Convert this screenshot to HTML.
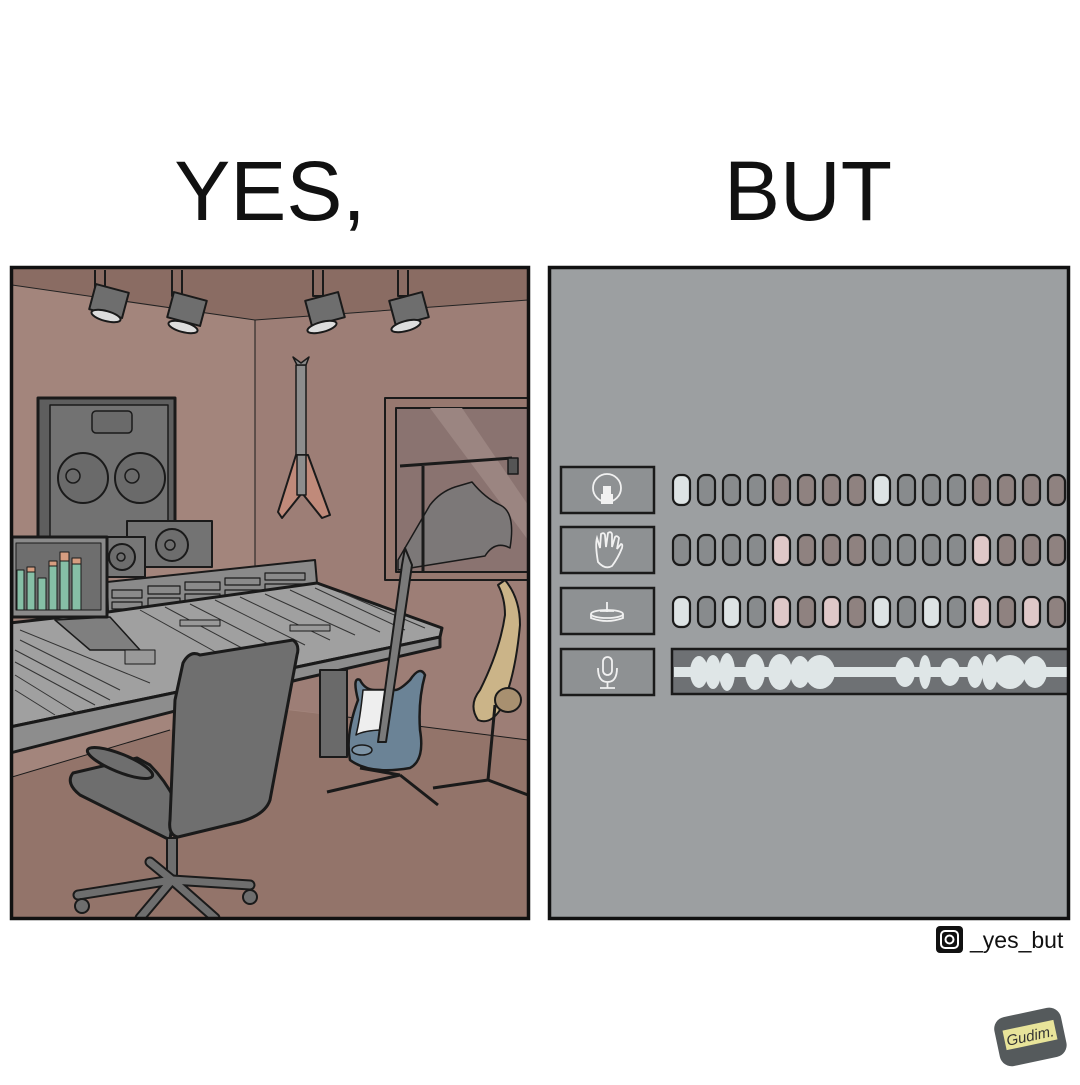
<!DOCTYPE html>
<html><head><meta charset="utf-8"><style>
html,body{margin:0;padding:0;background:#fff;}
body{width:1080px;height:1080px;overflow:hidden;font-family:"Liberation Sans",sans-serif;}
</style></head><body>
<svg width="1080" height="1080" viewBox="0 0 1080 1080" xmlns="http://www.w3.org/2000/svg">
<rect width="1080" height="1080" fill="#fff"/>
<text x="270" y="220" font-family="Liberation Sans" font-size="84" text-anchor="middle" fill="#111">YES,</text>
<text x="808" y="220" font-family="Liberation Sans" font-size="84" text-anchor="middle" fill="#111">BUT</text>

<defs><clipPath id="cl"><rect x="12" y="268" width="516" height="650"/></clipPath>
<clipPath id="cr"><rect x="550" y="268" width="518" height="650"/></clipPath></defs>
<g clip-path="url(#cl)" stroke="#1a1a1a" stroke-linejoin="round">
<rect x="12" y="268" width="516" height="650" fill="#93746a" stroke="none"/>
<polygon points="12,268 528,268 528,740 347,717 287,710 170,730 12,777" fill="#a3857c" stroke="none"/>
<polygon points="255,320 528,300 528,740 255,705" fill="#9d7e76" stroke="none"/>
<polygon points="12,268 528,268 528,300 255,320 12,285" fill="#8a6c63" stroke="#222" stroke-width="1"/>
<line x1="255" y1="320" x2="255" y2="705" stroke-width="1"/>
<polyline points="12,777 170,730" fill="none" stroke-width="1"/>
<polyline points="347,717 528,740" fill="none" stroke-width="1"/>
<g fill="#6e6e6e" stroke-width="2">
<path d="M95,270v18h10v-18" fill="none"/><rect x="92" y="288" width="34" height="26" transform="rotate(15 109 301)"/><ellipse cx="106" cy="316" rx="15" ry="5" fill="#ddd" transform="rotate(15 106 316)"/>
<path d="M172,270v26h10v-26" fill="none"/><rect x="170" y="296" width="34" height="26" transform="rotate(15 187 309)"/><ellipse cx="183" cy="327" rx="15" ry="5" fill="#ddd" transform="rotate(15 183 327)"/>
<path d="M313,270v26h10v-26" fill="none"/><rect x="308" y="296" width="34" height="26" transform="rotate(-15 325 309)"/><ellipse cx="322" cy="327" rx="15" ry="5" fill="#ddd" transform="rotate(-15 322 327)"/>
<path d="M398,270v26h10v-26" fill="none"/><rect x="392" y="296" width="34" height="26" transform="rotate(-15 409 309)"/><ellipse cx="406" cy="326" rx="15" ry="5" fill="#ddd" transform="rotate(-15 406 326)"/>
</g>
<rect x="385" y="398" width="150" height="182" fill="#97786f" stroke-width="2"/>
<rect x="396" y="408" width="140" height="164" fill="#8a7370" stroke-width="2"/>
<polygon points="430,408 462,408 528,505 528,540" fill="#9b8581" stroke="none"/>
<path d="M398,560 L430,505 Q440,492 455,487 L472,482 Q485,498 500,505 Q516,512 510,548 Q495,540 485,556 L398,570Z" fill="#7c7878" stroke-width="1.5"/>
<line x1="400" y1="466" x2="512" y2="458" stroke-width="3"/>
<line x1="423" y1="466" x2="423" y2="572" stroke-width="3"/>
<rect x="508" y="458" width="10" height="16" fill="#555" stroke-width="1.5"/>
<rect x="296" y="365" width="10" height="110" fill="#8d8d8d" stroke-width="1.5"/>
<path d="M297,365 l-4,-8 l8,6 l8,-6 l-3,8z" fill="#888" stroke-width="1.5"/>
<path d="M296,455 L278,512 L282,518 L302,493 L322,518 L330,515 L308,455Z" fill="#c08a7a" stroke-width="2"/>
<rect x="297" y="455" width="9" height="40" fill="#8d8d8d" stroke-width="1.5"/>
<rect x="38" y="398" width="137" height="150" fill="#5e5e5e" stroke-width="3"/>
<rect x="50" y="405" width="118" height="143" fill="#727272" stroke-width="1.5"/>
<rect x="92" y="411" width="40" height="22" rx="4" fill="#6a6a6a" stroke-width="1.5"/>
<circle cx="83" cy="478" r="25" fill="#6a6a6a" stroke-width="2"/><circle cx="73" cy="476" r="7" fill="#6a6a6a" stroke-width="1.5"/>
<circle cx="140" cy="478" r="25" fill="#6a6a6a" stroke-width="2"/><circle cx="132" cy="476" r="7" fill="#6a6a6a" stroke-width="1.5"/>
<rect x="127" y="521" width="85" height="46" fill="#737373" stroke-width="2"/>
<circle cx="172" cy="545" r="16" fill="#6d6d6d" stroke-width="2"/><circle cx="170" cy="545" r="5" fill="#6d6d6d" stroke-width="1.5"/>
<rect x="100" y="537" width="45" height="40" fill="#777" stroke-width="2"/>
<circle cx="122" cy="557" r="13" fill="#6d6d6d" stroke-width="2"/><circle cx="121" cy="557" r="4" fill="#6d6d6d" stroke-width="1.5"/>
<polygon points="107,582 315,560 317,583 108,612" fill="#8a8a8a" stroke-width="2"/>
<g fill="none" stroke-width="1.2">
<path d="M112,590h30v8h-30zM112,602h30v7h-30zM148,586h32v8h-32zM148,598h32v8h-32zM185,582h35v8h-35zM185,594h35v8h-35zM225,578h35v7h-35zM225,590h35v7h-35zM265,573h40v7h-40zM265,584h40v7h-40z"/>
</g>
<polygon points="10,623 108,612 317,583 442,628 440,637 297,667 10,727" fill="#a0a0a0" stroke-width="3"/>
<polygon points="10,727 297,667 440,637 440,647 297,680 10,753" fill="#8d8d8d" stroke-width="3"/>
<polygon points="55,620 110,617 140,650 90,650" fill="#7f7f7f" stroke-width="1.5"/>
<g stroke="#333" stroke-width="1">
<line x1="20" y1="640" x2="120" y2="690"/><line x1="15" y1="650" x2="110" y2="700"/><line x1="15" y1="662" x2="95" y2="705"/><line x1="15" y1="675" x2="75" y2="712"/><line x1="15" y1="690" x2="55" y2="715"/>
<line x1="20" y1="630" x2="150" y2="683"/>
<line x1="140" y1="610" x2="230" y2="660"/><line x1="165" y1="607" x2="255" y2="655"/><line x1="190" y1="604" x2="280" y2="650"/><line x1="215" y1="600" x2="305" y2="645"/>
<line x1="240" y1="597" x2="330" y2="640"/><line x1="265" y1="594" x2="355" y2="635"/><line x1="290" y1="590" x2="380" y2="632"/><line x1="315" y1="588" x2="405" y2="630"/><line x1="340" y1="592" x2="425" y2="628"/>
</g>
<g fill="#999" stroke-width="1"><rect x="125" y="650" width="30" height="14"/><rect x="180" y="620" width="40" height="6"/><rect x="290" y="625" width="40" height="6"/></g>
<rect x="320" y="670" width="27" height="87" fill="#6a6a6a" stroke-width="2"/>
<rect x="12" y="537" width="95" height="80" fill="#8a8a8a" stroke-width="3"/>
<rect x="16" y="543" width="85" height="67" fill="#6e6e6e" stroke-width="1"/>
<g fill="#86bfa6" stroke-width="1">
<rect x="17" y="570" width="7" height="40"/><rect x="27" y="572" width="8" height="38"/><rect x="38" y="578" width="8" height="32"/><rect x="49" y="566" width="8" height="44"/><rect x="60" y="561" width="9" height="49"/><rect x="72" y="564" width="9" height="46"/>
</g>
<g fill="#d69d80" stroke-width="1"><rect x="27" y="567" width="8" height="5"/><rect x="49" y="561" width="8" height="5"/><rect x="60" y="552" width="9" height="9"/><rect x="72" y="558" width="9" height="6"/></g>
<g stroke-width="3"><line x1="327" y1="792" x2="400" y2="775"/><line x1="400" y1="775" x2="438" y2="805"/><line x1="360" y1="768" x2="400" y2="775"/></g>
<path d="M360,680 Q352,676 358,700 Q345,735 350,760 Q370,775 410,768 Q425,760 420,730 Q418,700 425,675 Q420,665 410,680 Q400,690 395,690 L375,690 Q365,690 360,680Z" fill="#6b8396" stroke-width="2.5"/>
<path d="M363,690 Q360,720 356,735 Q365,730 385,730 L390,690Z" fill="#eee" stroke-width="1.5"/>
<ellipse cx="362" cy="750" rx="10" ry="5" fill="#7d94a6" stroke-width="1.5"/>
<polygon points="378,742 386,742 412,565 405,548 402,565" fill="#7a7a7a" stroke-width="2"/>
<path d="M478,720 Q468,705 480,690 Q500,650 505,615 Q505,598 498,585 L505,580 Q520,598 520,625 Q515,680 500,710 Q490,725 478,720Z" fill="#cbb488" stroke-width="2"/>
<ellipse cx="508" cy="700" rx="13" ry="12" fill="#a89070" stroke-width="2"/>
<g stroke-width="3"><line x1="495" y1="705" x2="488" y2="780"/><line x1="433" y1="788" x2="488" y2="780"/><line x1="488" y1="780" x2="528" y2="795"/></g>
<path d="M73,773 Q65,783 80,795 L170,840 L175,800 Q165,780 150,765 L137,758Z" fill="#6e6e6e" stroke-width="3"/>
<path d="M183,663 Q190,650 200,655 L293,640 Q300,645 297,655 L270,800 Q265,815 240,822 L178,837 Q168,835 170,820 L175,700Z" fill="#6f6f6f" stroke-width="3"/>
<ellipse cx="120" cy="763" rx="35" ry="9" transform="rotate(22 120 763)" fill="#6e6e6e" stroke-width="3"/>
<rect x="167" y="838" width="10" height="40" fill="#6e6e6e" stroke-width="2"/>
<g stroke="#1a1a1a" stroke-width="11" stroke-linecap="round"><line x1="172" y1="880" x2="78" y2="895"/><line x1="172" y1="880" x2="250" y2="885"/><line x1="172" y1="880" x2="150" y2="862"/><line x1="172" y1="880" x2="140" y2="918"/><line x1="172" y1="880" x2="215" y2="918"/></g>
<g stroke="#6e6e6e" stroke-width="7" stroke-linecap="round"><line x1="172" y1="880" x2="78" y2="895"/><line x1="172" y1="880" x2="250" y2="885"/><line x1="172" y1="880" x2="150" y2="862"/><line x1="172" y1="880" x2="140" y2="918"/><line x1="172" y1="880" x2="215" y2="918"/></g>
<circle cx="82" cy="906" r="7" fill="#6e6e6e" stroke-width="2"/><circle cx="250" cy="897" r="7" fill="#6e6e6e" stroke-width="2"/>
</g>
<rect x="11.5" y="267.5" width="517" height="651" fill="none" stroke="#111" stroke-width="3.5"/>

<g clip-path="url(#cr)">
<rect x="550" y="268" width="518" height="650" fill="#9c9fa1"/>
<g fill="#8e9193" stroke="#1a1a1a" stroke-width="2.5">
<rect x="561" y="467" width="93" height="46"/><rect x="561" y="527" width="93" height="46"/><rect x="561" y="588" width="93" height="46"/><rect x="561" y="649" width="93" height="46"/>
</g>
<g fill="none" stroke="#f1f1f1" stroke-width="1.8">
<circle cx="607" cy="488" r="14"/>
<path d="M598,562 Q595,545 597,538 L600,548 L601,534 Q604,532 605,535 L606,547 L608,533 Q611,531 612,534 L612,547 L615,537 Q617,535 619,538 L617,549 L621,544 Q623,544 622,548 Q618,558 612,566 Q605,570 598,562Z"/>
<ellipse cx="607" cy="614" rx="16" ry="4"/><path d="M591,614 v4 Q607,624 623,618 v-4 M607,602 v10 M600,611 h14"/>
<rect x="603" y="657" width="9" height="18" rx="4.5"/><path d="M598,668 Q598,682 607.5,682 Q617,682 617,668 M607.5,682 v6 M600,688 h15"/>
</g>
<rect x="603" y="486" width="8" height="8" fill="#f1f1f1"/><rect x="601" y="494" width="12" height="10" fill="#f1f1f1"/>
<g stroke="#1a1a1a" stroke-width="2.2">
<g transform="translate(0,475)">
<rect x="673" width="17" height="30" rx="7" fill="#dde3e4"/><rect x="698" width="17" height="30" rx="7" fill="#888b8d"/><rect x="723" width="17" height="30" rx="7" fill="#888b8d"/><rect x="748" width="17" height="30" rx="7" fill="#888b8d"/>
<rect x="773" width="17" height="30" rx="7" fill="#8f8280"/><rect x="798" width="17" height="30" rx="7" fill="#8f8280"/><rect x="823" width="17" height="30" rx="7" fill="#8f8280"/><rect x="848" width="17" height="30" rx="7" fill="#8f8280"/>
<rect x="873" width="17" height="30" rx="7" fill="#dde3e4"/><rect x="898" width="17" height="30" rx="7" fill="#888b8d"/><rect x="923" width="17" height="30" rx="7" fill="#888b8d"/><rect x="948" width="17" height="30" rx="7" fill="#888b8d"/>
<rect x="973" width="17" height="30" rx="7" fill="#8f8280"/><rect x="998" width="17" height="30" rx="7" fill="#8f8280"/><rect x="1023" width="17" height="30" rx="7" fill="#8f8280"/><rect x="1048" width="17" height="30" rx="7" fill="#8f8280"/>
</g>
<g transform="translate(0,535)">
<rect x="673" width="17" height="30" rx="7" fill="#888b8d"/><rect x="698" width="17" height="30" rx="7" fill="#888b8d"/><rect x="723" width="17" height="30" rx="7" fill="#888b8d"/><rect x="748" width="17" height="30" rx="7" fill="#888b8d"/>
<rect x="773" width="17" height="30" rx="7" fill="#dfc8c8"/><rect x="798" width="17" height="30" rx="7" fill="#8f8280"/><rect x="823" width="17" height="30" rx="7" fill="#8f8280"/><rect x="848" width="17" height="30" rx="7" fill="#8f8280"/>
<rect x="873" width="17" height="30" rx="7" fill="#888b8d"/><rect x="898" width="17" height="30" rx="7" fill="#888b8d"/><rect x="923" width="17" height="30" rx="7" fill="#888b8d"/><rect x="948" width="17" height="30" rx="7" fill="#888b8d"/>
<rect x="973" width="17" height="30" rx="7" fill="#dfc8c8"/><rect x="998" width="17" height="30" rx="7" fill="#8f8280"/><rect x="1023" width="17" height="30" rx="7" fill="#8f8280"/><rect x="1048" width="17" height="30" rx="7" fill="#8f8280"/>
</g>
<g transform="translate(0,597)">
<rect x="673" width="17" height="30" rx="7" fill="#dde3e4"/><rect x="698" width="17" height="30" rx="7" fill="#888b8d"/><rect x="723" width="17" height="30" rx="7" fill="#dde3e4"/><rect x="748" width="17" height="30" rx="7" fill="#888b8d"/>
<rect x="773" width="17" height="30" rx="7" fill="#dfc8c8"/><rect x="798" width="17" height="30" rx="7" fill="#8f8280"/><rect x="823" width="17" height="30" rx="7" fill="#dfc8c8"/><rect x="848" width="17" height="30" rx="7" fill="#8f8280"/>
<rect x="873" width="17" height="30" rx="7" fill="#dde3e4"/><rect x="898" width="17" height="30" rx="7" fill="#888b8d"/><rect x="923" width="17" height="30" rx="7" fill="#dde3e4"/><rect x="948" width="17" height="30" rx="7" fill="#888b8d"/>
<rect x="973" width="17" height="30" rx="7" fill="#dfc8c8"/><rect x="998" width="17" height="30" rx="7" fill="#8f8280"/><rect x="1023" width="17" height="30" rx="7" fill="#dfc8c8"/><rect x="1048" width="17" height="30" rx="7" fill="#8f8280"/>
</g>
</g>
<rect x="672" y="649" width="400" height="45" fill="#6e7174" stroke="#1a1a1a" stroke-width="2.5"/>
<g fill="#dfe6e7">
<rect x="674" y="667" width="400" height="10"/>
<ellipse cx="699" cy="672" rx="9" ry="16"/><ellipse cx="713" cy="672" rx="8" ry="17"/><ellipse cx="727" cy="672" rx="8" ry="19"/>
<ellipse cx="755" cy="672" rx="10" ry="18"/><ellipse cx="780" cy="672" rx="12" ry="18"/><ellipse cx="800" cy="672" rx="10" ry="16"/><ellipse cx="820" cy="672" rx="15" ry="17"/>
<ellipse cx="905" cy="672" rx="10" ry="15"/><ellipse cx="925" cy="672" rx="6" ry="17"/><ellipse cx="950" cy="672" rx="10" ry="14"/><ellipse cx="975" cy="672" rx="8" ry="16"/>
<ellipse cx="990" cy="672" rx="8" ry="18"/><ellipse cx="1010" cy="672" rx="16" ry="17"/><ellipse cx="1035" cy="672" rx="12" ry="16"/>
</g>
</g>
<rect x="549.5" y="267.5" width="519" height="651" fill="none" stroke="#111" stroke-width="3.5"/>

<rect x="936" y="926" width="27" height="27" rx="4" fill="#111"/>
<rect x="941" y="931" width="17" height="17" rx="4" fill="none" stroke="#fff" stroke-width="2"/>
<circle cx="949.5" cy="939.5" r="4" fill="none" stroke="#fff" stroke-width="2"/>
<text x="970" y="948" font-family="Liberation Sans" font-size="23" fill="#111">_yes_but</text>
<g transform="rotate(-12 1030 1035)">
<rect x="996" y="1012" width="68" height="50" rx="12" fill="#555a5c"/>
<rect x="1004" y="1025" width="52" height="20" fill="#e8e49a"/>
<text x="1030" y="1041" font-family="Liberation Sans" font-size="15" text-anchor="middle" fill="#333" font-style="italic">Gudim.</text>
</g>
</svg>
</body></html>
